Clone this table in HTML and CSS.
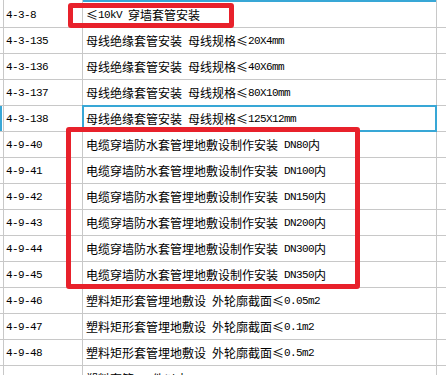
FILE: index.html
```html
<!DOCTYPE html>
<html lang="zh-CN">
<head>
<meta charset="utf-8">
<title>定额列表</title>
<link rel="stylesheet" href="styles.css">
</head>
<body>
<div class="sheet">
  <div class="row top-strip">
    <div class="cell stub"></div>
    <div class="cell code"></div>
    <div class="cell name selected-top"></div>
    <div class="cell rest"></div>
  </div>
  <div class="row">
    <div class="cell stub"></div>
    <div class="cell code">4-3-8</div>
    <div class="cell name"><span class="le">≤</span><span class="en">10kV </span>穿墙套管安装</div>
    <div class="cell rest"></div>
  </div>
  <div class="row">
    <div class="cell stub"></div>
    <div class="cell code">4-3-135</div>
    <div class="cell name">母线绝缘套管安装<span class="en"> </span>母线规格<span class="le">≤</span><span class="en">20X4mm</span></div>
    <div class="cell rest"></div>
  </div>
  <div class="row">
    <div class="cell stub"></div>
    <div class="cell code">4-3-136</div>
    <div class="cell name">母线绝缘套管安装<span class="en"> </span>母线规格<span class="le">≤</span><span class="en">40X6mm</span></div>
    <div class="cell rest"></div>
  </div>
  <div class="row">
    <div class="cell stub"></div>
    <div class="cell code">4-3-137</div>
    <div class="cell name">母线绝缘套管安装<span class="en"> </span>母线规格<span class="le">≤</span><span class="en">80X10mm</span></div>
    <div class="cell rest"></div>
  </div>
  <div class="row">
    <div class="cell stub active"></div>
    <div class="cell code">4-3-138</div>
    <div class="cell name selected">母线绝缘套管安装<span class="en"> </span>母线规格<span class="le">≤</span><span class="en">125X12mm</span></div>
    <div class="cell rest"></div>
  </div>
  <div class="row">
    <div class="cell stub"></div>
    <div class="cell code">4-9-40</div>
    <div class="cell name">电缆穿墙防水套管埋地敷设制作安装<span class="en"> DN80</span>内</div>
    <div class="cell rest"></div>
  </div>
  <div class="row">
    <div class="cell stub"></div>
    <div class="cell code">4-9-41</div>
    <div class="cell name">电缆穿墙防水套管埋地敷设制作安装<span class="en"> DN100</span>内</div>
    <div class="cell rest"></div>
  </div>
  <div class="row">
    <div class="cell stub"></div>
    <div class="cell code">4-9-42</div>
    <div class="cell name">电缆穿墙防水套管埋地敷设制作安装<span class="en"> DN150</span>内</div>
    <div class="cell rest"></div>
  </div>
  <div class="row">
    <div class="cell stub"></div>
    <div class="cell code">4-9-43</div>
    <div class="cell name">电缆穿墙防水套管埋地敷设制作安装<span class="en"> DN200</span>内</div>
    <div class="cell rest"></div>
  </div>
  <div class="row">
    <div class="cell stub"></div>
    <div class="cell code">4-9-44</div>
    <div class="cell name">电缆穿墙防水套管埋地敷设制作安装<span class="en"> DN300</span>内</div>
    <div class="cell rest"></div>
  </div>
  <div class="row">
    <div class="cell stub"></div>
    <div class="cell code">4-9-45</div>
    <div class="cell name">电缆穿墙防水套管埋地敷设制作安装<span class="en"> DN350</span>内</div>
    <div class="cell rest"></div>
  </div>
  <div class="row">
    <div class="cell stub"></div>
    <div class="cell code">4-9-46</div>
    <div class="cell name">塑料矩形套管埋地敷设<span class="en"> </span>外轮廓截面<span class="le">≤</span><span class="en">0.05m2</span></div>
    <div class="cell rest"></div>
  </div>
  <div class="row">
    <div class="cell stub"></div>
    <div class="cell code">4-9-47</div>
    <div class="cell name">塑料矩形套管埋地敷设<span class="en"> </span>外轮廓截面<span class="le">≤</span><span class="en">0.1m2</span></div>
    <div class="cell rest"></div>
  </div>
  <div class="row">
    <div class="cell stub"></div>
    <div class="cell code">4-9-48</div>
    <div class="cell name">塑料矩形套管埋地敷设<span class="en"> </span>外轮廓截面<span class="le">≤</span><span class="en">0.5m2</span></div>
    <div class="cell rest"></div>
  </div>
  <div class="row">
    <div class="cell stub"></div>
    <div class="cell code">4-9-49</div>
    <div class="cell name">塑料套管<span class="en"> </span>二件以内</div>
    <div class="cell rest"></div>
  </div>

  <div class="mark mark-one"></div>
  <div class="mark mark-two"></div>
</div>
</body>
</html>
```

FILE: styles.css
```css
* {
  box-sizing: border-box;
}

html, body {
  margin: 0;
  padding: 0;
  background: #ffffff;
  overflow: hidden;
}

.sheet {
  position: relative;
  width: 446px;
  height: 375px;
  overflow: hidden;
  font-family: "Noto Sans CJK SC", "Liberation Sans", sans-serif;
  font-size: 12px;
  color: #000000;
}

.row {
  display: grid;
  grid-template-columns: 4px 79px 354px 1fr;
  height: 26px;
  border-bottom: 1px solid #c8c8c8;
}

.row.top-strip {
  height: 2px;
  border-bottom: none;
}

.cell {
  display: flex;
  align-items: center;
  border-right: 1px solid #c8c8c8;
  white-space: nowrap;
  overflow: visible;
  min-width: 0;
}

.cell.rest {
  border-right: none;
}

.stub.active {
  background: linear-gradient(to right, #38a7d6 0, #38a7d6 2px, #ffffff 2px);
}

.code {
  padding-left: 2px;
  font-family: "Liberation Mono", monospace;
  font-size: 11px;
  letter-spacing: -0.6px;
}

.name {
  padding-left: 3px;
  position: relative;
}

.selected-top {
  background: #38a7d6;
}

.name.selected::after {
  content: "";
  position: absolute;
  top: -1px;
  left: -1px;
  right: -1px;
  bottom: -1px;
  border: 2px solid #38a7d6;
}

.en {
  font-family: "Liberation Mono", monospace;
  font-size: 11px;
  letter-spacing: -0.6px;
  white-space: pre;
}

.le {
  display: inline-block;
  width: 12px;
  text-align: left;
}

.mark {
  position: absolute;
  border: 5px solid #e8212b;
  border-radius: 3px;
}

.mark-one {
  left: 68px;
  top: 3px;
  width: 166px;
  height: 25px;
}

.mark-two {
  left: 66px;
  top: 127px;
  width: 294px;
  height: 162px;
}
```
